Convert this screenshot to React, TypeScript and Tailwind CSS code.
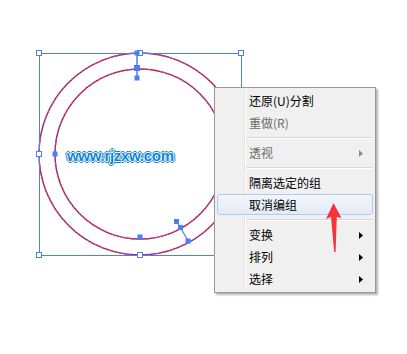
import React from "react";

const BLUE = "#4a7ff6";
const RED = "#ee0018";

// hollow bounding-box handles
const boxHandles: [number, number][] = [
  [39, 53],
  [140, 53],
  [241, 53],
  [39, 154],
  [39, 255],
  [140, 255],
  [241, 255],
];

// filled anchor points / direction handles
const anchors: [number, number, number][] = [
  [137, 53, 5],
  [137, 68, 6],
  [137, 78, 5],
  [55, 154, 5],
  [140, 237, 5],
  [176.5, 221.5, 5],
  [180.5, 227.5, 5],
  [188, 241, 5],
];

function Artwork() {
  return (
    <svg className="absolute left-0 top-0" width={407} height={354} viewBox="0 0 407 354">
      {/* outer & inner circles */}
      <circle cx={140} cy={154} r={101} fill="none" stroke={RED} strokeWidth={1.4} />
      <circle cx={140} cy={154} r={101} fill="none" stroke={BLUE} strokeWidth={1.2} strokeDasharray="2 2" />
      <circle cx={140} cy={154} r={85} fill="none" stroke={RED} strokeWidth={1.4} />
      <circle cx={140} cy={154} r={85} fill="none" stroke={BLUE} strokeWidth={1.2} strokeDasharray="2 2" />

      {/* bounding box */}
      <rect x={39.5} y={53.5} width={202} height={202} fill="none" stroke={BLUE} strokeWidth={1} />

      {/* handle lines */}
      <line x1={137} y1={52} x2={137} y2={78} stroke={BLUE} strokeWidth={1.5} />
      <line x1={176.5} y1={221.5} x2={180.5} y2={227.5} stroke={BLUE} strokeWidth={1.2} />
      <line x1={180.5} y1={227.5} x2={188} y2={241} stroke={BLUE} strokeWidth={1.2} />

      {boxHandles.map(([x, y]) => (
        <rect key={`h${x}-${y}`} x={x - 2.5} y={y - 2.5} width={5} height={5} fill="#fff" stroke={BLUE} strokeWidth={1} />
      ))}
      {anchors.map(([x, y, s]) => (
        <rect key={`a${x}-${y}`} x={x - s / 2} y={y - s / 2} width={s} height={s} fill={BLUE} />
      ))}
    </svg>
  );
}

function RedArrow() {
  return (
    <svg className="absolute left-[320px] top-[198px]" width={28} height={60} viewBox="320 198 28 60">
      <path d="M333.5 203 L341.5 218 L336.8 217 L335.6 252 L334.2 252 L331 217 L326 219 Z" fill="#f5333c" />
    </svg>
  );
}

type Item = { label: string; disabled?: boolean; submenu?: boolean; active?: boolean } | "sep";

const items: Item[] = [
  { label: "还原(U)分割" },
  { label: "重做(R)", disabled: true },
  "sep",
  { label: "透视", disabled: true, submenu: true },
  "sep",
  { label: "隔离选定的组" },
  { label: "取消编组", active: true },
  "sep",
  { label: "变换", submenu: true },
  { label: "排列", submenu: true },
  { label: "选择", submenu: true },
];

function ContextMenu() {
  return (
    <div className="absolute left-[214px] top-[87px] w-[162px] border border-[#979797] bg-[#f0f0f0] py-[2px] shadow-[2px_2px_2px_rgba(0,0,0,0.3)]">
      {/* gutter line */}
      <div className="absolute left-[29px] top-[2px] bottom-[2px] w-[2px] border-l border-[#e2e3e3] border-r border-r-white" />
      {items.map((it, i) =>
        it === "sep" ? (
          <div key={i} className="flex h-[8px] items-center pl-[30px] pr-[2px]">
            <div className="h-[2px] w-full border-t border-[#d7d7d7] border-b border-b-white" />
          </div>
        ) : (
          <div key={i} className="relative flex h-[22px] items-center pl-[34px] pr-[12px]">
            {it.active && (
              <div className="absolute left-[2px] right-[2px] top-0 bottom-[1px] rounded-[3px] border border-[#aecbf0] bg-gradient-to-b from-[#f2f6fc] to-[#e2ebf7]" />
            )}
            <span
              className={`relative flex-1 text-[12px] leading-none ${it.disabled ? "text-[#6d6d6d]" : "text-black"}`}
            >
              {it.label}
            </span>
            {it.submenu && (
              <svg className="relative" width={4} height={7} viewBox="0 0 4 7">
                <path d="M0 0 L4 3.5 L0 7 Z" fill={it.disabled ? "#8a8a8a" : "#000"} />
              </svg>
            )}
          </div>
        )
      )}
    </div>
  );
}

export default function App() {
  return (
    <div
      className="relative h-[354px] w-[407px] overflow-hidden bg-white"
      style={{ fontFamily: '"Noto Sans CJK SC", "Noto Sans", sans-serif' }}
    >
      <Artwork />
      <div
        className="absolute left-[67px] top-[148px] text-[15px] font-extrabold leading-none tracking-[-0.3px] text-[#0d86d8] [text-shadow:1px_0_0_#fff,-1px_0_0_#fff,0_1px_0_#fff,0_-1px_0_#fff,2px_0_0_#1c7fd0,-2px_0_0_#1c7fd0,0_2px_0_#1c7fd0,0_-2px_0_#1c7fd0,1px_1px_0_#1c7fd0,-1px_-1px_0_#1c7fd0,1px_-1px_0_#1c7fd0,-1px_1px_0_#1c7fd0]"
        style={{ fontFamily: '"Liberation Sans", Arial, sans-serif' }}
      >
        www.rjzxw.com
      </div>
      <ContextMenu />
      <RedArrow />
    </div>
  );
}
